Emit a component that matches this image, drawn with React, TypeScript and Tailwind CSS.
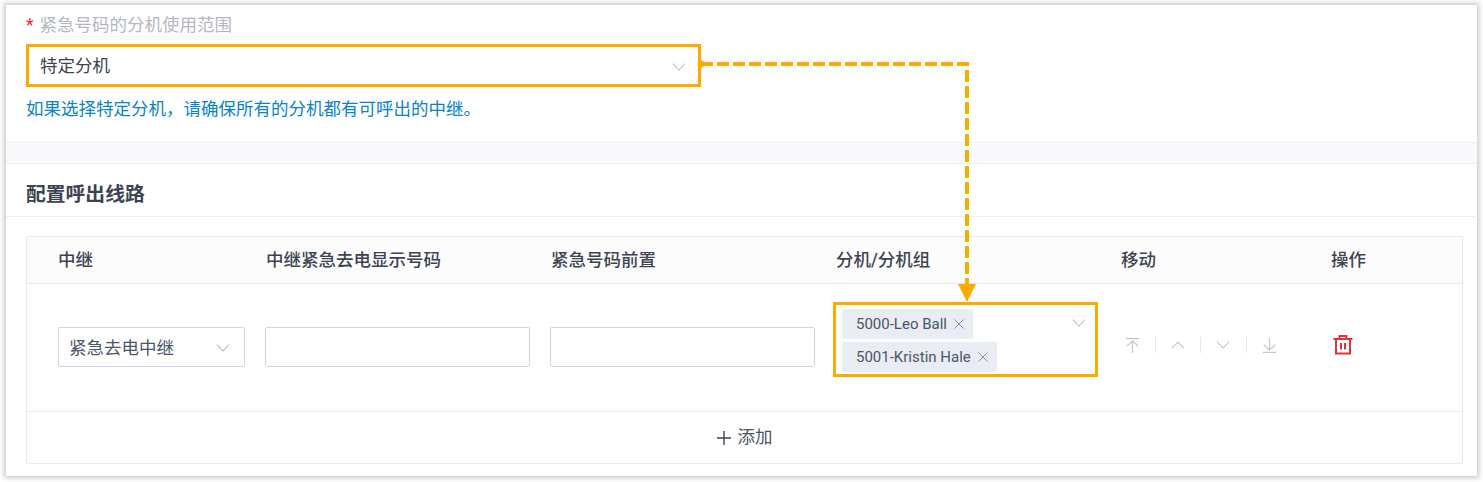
const columnsClass = 'grid grid-cols-[207px_285px_285px_285px_210px_1fr] pl-[31px]';

const headers = ['中继', '中继紧急去电显示号码', '紧急号码前置', '分机/分机组', '移动', '操作'];

function ChevronIcon({ up = false, className = '' }: { up?: boolean; className?: string }) {
  return (
    <svg className={`h-[8px] w-[14px] shrink-0 ${className}`} viewBox="0 0 14 8" fill="none" stroke="currentColor" strokeWidth="1.1">
      <path d={up ? 'M0.8 7.4 7 1l6.2 6.4' : 'M0.8 0.6 7 7l6.2-6.4'} />
    </svg>
  );
}

function Tag({ label }: { label: string }) {
  return (
    <span className="flex h-[30px] w-fit items-center rounded-[2px] bg-[#e9ecf3] pl-[14px] pr-[9px] text-[15px] text-[#4a5568]">
      {label}
      <svg className="ml-[7px] h-[10px] w-[10px] text-[#8a8f99]" viewBox="0 0 10 10" fill="none" stroke="currentColor" strokeWidth="1">
        <path d="M0.5 0.5l9 9M9.5 0.5l-9 9" />
      </svg>
    </span>
  );
}

function Divider({ className = '' }: { className?: string }) {
  return <span className={`h-[16px] w-px shrink-0 bg-[#e4e7ee] ${className}`} />;
}

export default function App() {
  return (
    <div className="h-[482px] bg-white pb-[6px] pl-[6px] pr-[6px] pt-[5px] font-['Roboto','Noto_Sans_CJK_SC',sans-serif]">
      <div className="relative flex h-[471px] flex-col bg-white shadow-[0_0_5px_2px_rgba(0,0,0,0.22)]">
        {/* Form field */}
        <div className="h-[137px] pl-[20px] pr-[776px] pt-[10px]">
          <div className="flex h-[20px] items-center text-[17.5px] leading-[20px] text-[#b4b7c2]">
            <span className="mr-[6px] text-[#f5222d]">*</span>
            紧急号码的分机使用范围
          </div>
          <div className="mt-[9px] flex h-[43px] items-center justify-between border-[3px] border-[#fbab00] pl-[11px] pr-[12px] pt-[2px] text-[17.5px] text-[#3c4452]">
            特定分机
            <ChevronIcon className="text-[#c4c6cc]" />
          </div>
          <p className="mt-[10px] whitespace-nowrap text-[17.5px] leading-[24px] text-[#0a84c6]">
            如果选择特定分机{'\uFF0C'}请确保所有的分机都有可呼出的中继。
          </p>
        </div>

        <div className="h-[22px] border-y border-[#eeeff4] bg-[#f9f9fb]" />

        {/* Heading */}
        <div className="flex h-[53px] items-center border-b border-[#eeeff4] pl-[20px] pt-[10px] text-[19.8px] font-bold text-[#3c4452]">配置呼出线路</div>

        {/* Table */}
        <div className="ml-[20px] mr-[14px] mt-[19px] flex h-[228px] flex-col rounded-[2px] border border-[#e8e9f0]">
          <div className={`${columnsClass} h-[47px] items-center border-b border-[#e8e9f0] bg-[#fcfcfd] pt-px text-[17.5px] font-medium text-[#3c4452]`}>
            {headers.map((header, i) => (
              <span key={header} className={i > 0 ? 'pl-px' : ''}>
                {header}
              </span>
            ))}
          </div>

          <div className={`${columnsClass} h-[128px] items-center border-b border-[#e8e9f0]`}>
            <div className="-mt-[2px] flex h-[40px] w-[187px] items-center justify-between rounded-[2px] border border-[#d3d4e0] pl-[10px] pr-[14px] pt-[3px] text-[17.5px] text-[#4a5568]">
              紧急去电中继
              <ChevronIcon className="text-[#b9bbc2]" />
            </div>
            <div className="-mt-[2px] h-[40px] w-[265px] rounded-[2px] border border-[#d3d4e0]" />
            <div className="-mt-[2px] h-[40px] w-[265px] rounded-[2px] border border-[#d3d4e0]" />
            <div className="-ml-[2px] -mt-[16px] flex h-[75px] w-[265px] justify-between border-[3px] border-[#fbab00] pl-[6px] pr-[9px] pt-[4px]">
              <div className="flex flex-col gap-[3px]">
                <Tag label="5000-Leo Ball" />
                <Tag label="5001-Kristin Hale" />
              </div>
              <ChevronIcon className="mt-[10px] text-[#c4c6cc]" />
            </div>
            <div className="-mt-[5px] flex items-center pl-[6px] text-[#c5c7cd]">
              <svg className="h-[15px] w-[13px] shrink-0" viewBox="0 0 13 15" fill="none" stroke="currentColor" strokeWidth="1.2">
                <path d="M0 0.6h13M6.5 15V3M0.8 8.3 6.5 2.8l5.7 5.5" />
              </svg>
              <Divider className="ml-[16px]" />
              <ChevronIcon up className="ml-[15px]" />
              <Divider className="ml-[15px]" />
              <ChevronIcon className="ml-[15px]" />
              <Divider className="ml-[16px]" />
              <svg className="ml-[16px] h-[15px] w-[13px] shrink-0" viewBox="0 0 13 15" fill="none" stroke="currentColor" strokeWidth="1.2">
                <path d="M0 14.4h13M6.5 0V12M0.8 6.7l5.7 5.5 5.7-5.5" />
              </svg>
            </div>
            <div className="-mt-[5px] pl-[3px]">
              <svg className="h-[20px] w-[20px] text-[#e0343c]" viewBox="0 0 20 20" fill="none" stroke="currentColor" strokeWidth="2">
                <path d="M0.5 4h19M3 4v14.5h14V4M6.5 4V1h7v3" />
                <path d="M8 8v6.5M12 8v6.5" />
              </svg>
            </div>
          </div>

          <div className="flex flex-1 items-center justify-center text-[17.5px] text-[#4a5568]">
            <svg className="mr-[7px] h-[14px] w-[14px] text-[#3c4452]" viewBox="0 0 14 14" fill="none" stroke="currentColor" strokeWidth="1.4">
              <path d="M7 0v14M0 7h14" />
            </svg>
            添加
          </div>
        </div>

        {/* Callout arrow between the two highlighted fields */}
        <svg className="pointer-events-none absolute left-0 top-0 h-[471px] w-[1471px]" viewBox="0 0 1471 471" fill="none">
          <circle cx="695" cy="59" r="3.5" fill="#fbab00" />
          <path d="M695 59H961V282" stroke="#fbab00" strokeWidth="4" strokeDasharray="12 4" />
          <path d="M952 279h18l-9 18z" fill="#fbab00" />
        </svg>
      </div>
    </div>
  );
}
